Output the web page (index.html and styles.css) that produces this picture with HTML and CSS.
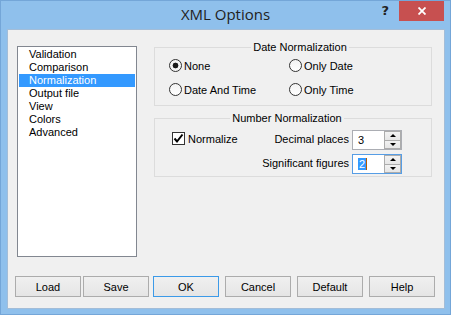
FILE: index.html
```html
<!DOCTYPE html>
<html lang="en">
<head>
  <meta charset="UTF-8" />
  <title>XML Options</title>
  <link rel="stylesheet" href="styles.css">
</head>
<body>
  <div class="window">
    <div class="titlebar">
      <div></div>
      <div class="title">XML Options</div>
      <div class="caption-buttons">
        <span class="help">?</span>
        <button class="close" title="Close">
          <svg width="8" height="8" viewBox="0 0 8 8">
            <path d="M0.5 0.5 L7.5 7.5 M7.5 0.5 L0.5 7.5" stroke="#fff" stroke-width="1.8" />
          </svg>
        </button>
      </div>
    </div>

    <div class="client">
      <div class="main">
        <ul class="listbox">
          <li>Validation</li>
          <li>Comparison</li>
          <li class="selected">Normalization</li>
          <li>Output file</li>
          <li>View</li>
          <li>Colors</li>
          <li>Advanced</li>
        </ul>

        <div class="groups">
          <fieldset class="group group-date">
            <legend>Date Normalization</legend>
            <div class="radio-grid">
              <label class="radio"><span class="radio-mark checked"></span>None</label>
              <label class="radio"><span class="radio-mark"></span>Only Date</label>
              <label class="radio"><span class="radio-mark"></span>Date And Time</label>
              <label class="radio"><span class="radio-mark"></span>Only Time</label>
            </div>
          </fieldset>

          <fieldset class="group group-number">
            <legend>Number Normalization</legend>
            <div class="number-grid">
              <label class="checkbox">
                <span class="check-mark">
                  <svg width="11" height="11" viewBox="0 0 11 11">
                    <path d="M1.5 5.5 L4 8.5 L9.5 1.5" fill="none" stroke="#000" stroke-width="2" />
                  </svg>
                </span>
                Normalize
              </label>
              <span class="field-label">Decimal places</span>
              <div class="spin">
                <span class="spin-value">3</span>
                <div class="spin-buttons">
                  <span class="spin-btn up"></span>
                  <span class="spin-btn down"></span>
                </div>
              </div>
              <span class="field-label row-2">Significant figures</span>
              <div class="spin focused row-2">
                <span class="spin-value"><span class="selection">2</span></span>
                <div class="spin-buttons">
                  <span class="spin-btn up"></span>
                  <span class="spin-btn down"></span>
                </div>
              </div>
            </div>
          </fieldset>
        </div>
      </div>

      <div class="buttons">
        <div class="button-group tight">
          <button class="btn">Load</button>
          <button class="btn">Save</button>
        </div>
        <div class="button-group">
          <button class="btn btn-default">OK</button>
          <button class="btn">Cancel</button>
          <button class="btn">Default</button>
          <button class="btn">Help</button>
        </div>
      </div>
    </div>
  </div>
</body>
</html>
```

FILE: styles.css
```css
* {
  margin: 0;
  padding: 0;
  box-sizing: border-box;
}

body {
  font-family: 'Liberation Sans', Arial, sans-serif;
  font-size: 11px;
  color: #000;
  background: #fff;
}

.window {
  width: 451px;
  height: 315px;
  background: #8fc0ec;
  box-shadow: inset 0 0 0 1px #74a6d8;
}

/* title bar */

.titlebar {
  display: grid;
  grid-template-columns: 1fr auto 1fr;
  height: 29px;
}

.title {
  font-family: 'Open Sans', 'Noto Sans', sans-serif;
  font-size: 15px;
  line-height: 20px;
  padding-top: 4px;
  color: #222;
}

.caption-buttons {
  display: flex;
  justify-content: flex-end;
  align-items: flex-start;
  padding-right: 7px;
}

.help {
  font-family: 'DejaVu Sans', sans-serif;
  font-weight: 700;
  font-size: 13px;
  line-height: 16px;
  margin-top: 3px;
  color: #222;
}

.close {
  width: 45px;
  height: 20px;
  margin-top: 1px;
  margin-left: 10px;
  border: none;
  background: #c75050;
  display: flex;
  align-items: center;
  justify-content: center;
}

/* client area */

.client {
  margin: 0 6px 6px 7px;
  height: 280px;
  background: #f0f0f0;
  border: 1px solid #a3bdd8;
}

.main {
  display: flex;
  align-items: flex-start;
}

.listbox {
  list-style: none;
  width: 120px;
  height: 211px;
  margin: 16px 0 0 9px;
  padding: 1px;
  background: #fff;
  border: 1px solid #828790;
}

.listbox li {
  height: 13px;
  line-height: 13px;
  padding-left: 10px;
}

.listbox li.selected {
  background: #3399ff;
  color: #fff;
}

.groups {
  margin: 11px 0 0 17px;
  width: 278px;
}

.group {
  border: 1px solid #dcdcdc;
  min-width: 0;
}

.group legend {
  margin: 0 auto;
  padding: 0 2px;
  line-height: 13px;
}

.group-date {
  padding: 5px 0 9px 14px;
}

.group-number {
  margin-top: 6px;
  padding: 5px 29px 2px 17px;
}

.radio-grid {
  display: grid;
  grid-template-columns: 120px 1fr;
  row-gap: 11px;
}

.radio {
  display: flex;
  align-items: center;
  gap: 2px;
  height: 13px;
}

.radio-mark {
  width: 13px;
  height: 13px;
  border: 1px solid #333;
  border-radius: 50%;
  background: linear-gradient(#f2f2f2, #fff);
}

.radio-mark.checked {
  background: radial-gradient(circle, #1b1b1b 2.6px, #f6f6f6 3.2px);
}

.number-grid {
  display: grid;
  grid-template-columns: 1fr auto 50px;
  grid-template-rows: 20px 20px;
  column-gap: 3px;
  row-gap: 4px;
  align-items: center;
}

.checkbox {
  display: flex;
  align-items: center;
  gap: 3px;
  margin-top: -3px;
}

.check-mark {
  width: 13px;
  height: 13px;
  border: 1px solid #333;
  background: #fff;
  display: flex;
  align-items: center;
  justify-content: center;
}

.field-label {
  justify-self: end;
  margin-top: -3px;
}

.row-2 {
  grid-row: 2;
  grid-column: 2;
}

.spin.row-2 {
  grid-column: 3;
}

.spin {
  display: flex;
  height: 20px;
  background: #fff;
  border: 1px solid #abadb3;
}

.spin.focused {
  border-color: #569de5;
}

.spin-value {
  flex: 1;
  padding-left: 5px;
  line-height: 18px;
}

.selection {
  background: #3399ff;
  color: #fff;
  padding: 0 1px;
  border-right: 1px solid #b35900;
}

.spin-buttons {
  width: 17px;
  display: flex;
  flex-direction: column;
}

.spin-btn {
  flex: 1;
  display: flex;
  align-items: center;
  justify-content: center;
  background: linear-gradient(#f2f2f2, #e6e6e6);
  border: 1px solid #acacac;
}

.spin-btn.down {
  border-top: none;
}

.spin-btn::before {
  content: '';
  border-left: 3px solid transparent;
  border-right: 3px solid transparent;
}

.spin-btn.up::before {
  border-bottom: 3px solid #000;
}

.spin-btn.down::before {
  border-top: 3px solid #000;
}

/* bottom buttons */

.buttons {
  display: flex;
  margin: 19px 0 0 7px;
}

.button-group {
  display: flex;
  gap: 6px;
}

.button-group.tight {
  gap: 2px;
  margin-right: 4px;
}

.btn {
  width: 66px;
  height: 21px;
  font-family: 'Liberation Sans', Arial, sans-serif;
  font-size: 11px;
  color: #000;
  border: 1px solid #acacac;
  background: linear-gradient(#f0f0f0, #e5e5e5);
}

.btn-default {
  border-color: #3c9ae8;
}
```
